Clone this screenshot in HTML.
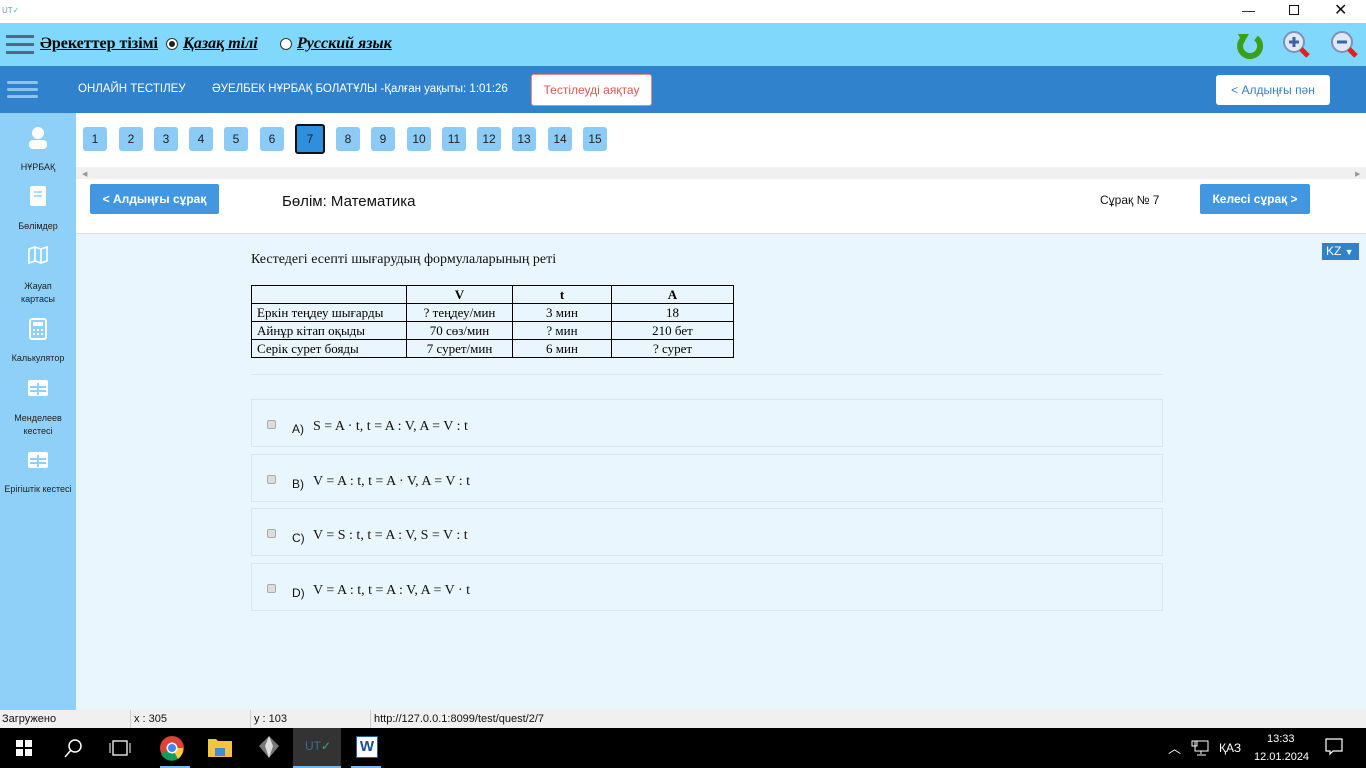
<!DOCTYPE html>
<html><head><meta charset="utf-8"><style>
*{box-sizing:border-box;margin:0;padding:0}
body{width:1366px;height:768px;position:relative;overflow:hidden;font-family:"Liberation Sans","DejaVu Sans",sans-serif;background:#eaf6fd}
.a{position:absolute}
.num{position:absolute;top:127px;width:24px;height:24px;background:#8ccbf5;border-radius:3px;font-size:12px;text-align:center;line-height:24px;color:#222}
.side{position:absolute;left:0;width:76px;text-align:center;font-size:9px;color:#222}
.opt{position:absolute;left:251px;width:912px;height:48px;border:1px solid #d8e7f0;background:#eaf6fd}
.cb{position:absolute;left:15px;top:20px;width:9px;height:9px;border:1px solid #aaa;border-radius:2px;background:#ddd}
.lt{position:absolute;left:40px;top:20px;font-size:12px;color:#111}
.ft{position:absolute;left:61px;top:19px;font:14px "Liberation Serif",serif;color:#111}
table{border-collapse:collapse;font:13px "Liberation Serif",serif;position:absolute;left:251px;top:285px}
td{border:1px solid #000;height:18px;padding:0 5px;text-align:center;line-height:16px}
td:first-child{text-align:left}
</style></head><body>
<div class="a" style="left:0;top:0;width:1366px;height:23px;background:#fff"></div>
<div class="a" style="left:2px;top:6px;font-size:8px;color:#6a9ab8">UT<span style="color:#3c9">✓</span></div>
<div class="a" style="left:1242px;top:3px;font-size:13px;color:#111">—</div>
<div class="a" style="left:1289px;top:5px;width:10px;height:10px;border:1px solid #111"></div>
<div class="a" style="left:1334px;top:0px;font-size:16px;color:#111">✕</div>
<div class="a" style="left:0;top:23px;width:1366px;height:43px;background:#80d9fd"></div>
<div class="a" style="left:6px;top:35px;width:28px;height:3px;background:#55658a;box-shadow:0 8px 0 #55658a,0 16px 0 #55658a"></div>
<div class="a" style="left:40px;top:35px;font:bold 16px 'Liberation Serif',serif;text-decoration:underline">Әрекеттер тізімі</div>
<div class="a" style="left:166px;top:38px;width:12px;height:12px;border-radius:50%;border:1px solid #333;background:#fff"><div style="margin:2px;width:6px;height:6px;border-radius:50%;background:#222"></div></div>
<div class="a" style="left:183px;top:35px;font:bold italic 16px 'Liberation Serif',serif;text-decoration:underline">Қазақ тілі</div>
<div class="a" style="left:280px;top:38px;width:12px;height:12px;border-radius:50%;border:1px solid #333;background:#fff"></div>
<div class="a" style="left:297px;top:35px;font:bold italic 16px 'Liberation Serif',serif;text-decoration:underline">Русский язык</div>
<svg class="a" style="left:1234px;top:30px" width="30" height="30"><path d="M22 8 A10 10 0 1 1 9 9" fill="none" stroke="#3aa01a" stroke-width="6"/><path d="M4 4 L15 4 L9 14Z" fill="#3aa01a"/></svg>
<svg class="a" style="left:1282px;top:30px" width="30" height="30"><circle cx="12" cy="12" r="10" fill="#dfe8f5" stroke="#8090b8" stroke-width="2"/><path d="M7 12h10M12 7v10" stroke="#4060a0" stroke-width="3"/><path d="M19 19l7 7" stroke="#e02020" stroke-width="5"/></svg>
<svg class="a" style="left:1330px;top:30px" width="30" height="30"><circle cx="12" cy="12" r="10" fill="#dfe8f5" stroke="#8090b8" stroke-width="2"/><path d="M7 12h10" stroke="#4060a0" stroke-width="3"/><path d="M19 19l7 7" stroke="#e02020" stroke-width="5"/></svg>
<div class="a" style="left:0;top:66px;width:1366px;height:47px;background:#3182cc"></div>
<div class="a" style="left:7px;top:81px;width:31px;height:3px;border-radius:2px;background:#8cc4f0;box-shadow:0 7px 0 #8cc4f0,0 14px 0 #8cc4f0"></div>
<div class="a" style="left:78px;top:83px;font-size:11.5px;color:#fff">ОНЛАЙН ТЕСТІЛЕУ</div>
<div class="a" style="left:212px;top:83px;font-size:11.5px;color:#fff">ӘУЕЛБЕК НҰРБАҚ БОЛАТҰЛЫ -Қалған уақыты: 1:01:26</div>
<div class="a" style="left:531px;top:74px;width:121px;height:32px;background:#fff;border:1px solid #e88;border-radius:3px;color:#e05555;font-size:12px;text-align:center;line-height:30px">Тестілеуді аяқтау</div>
<div class="a" style="left:1216px;top:75px;width:114px;height:30px;background:#fff;border-radius:3px;color:#3182cc;font-size:12px;text-align:center;line-height:30px">&lt; Алдыңғы пән</div>
<div class="a" style="left:0;top:113px;width:76px;height:597px;background:#8fd0f9"></div>
<svg class="a" style="left:27px;top:126px" width="22" height="24"><circle cx="11" cy="7" r="6" fill="#fff"/><rect x="2" y="14" width="18" height="9" rx="4" fill="#fff"/></svg>
<div class="side" style="top:162px">НҰРБАҚ</div>
<svg class="a" style="left:29px;top:185px" width="18" height="22"><rect x="1" y="1" width="16" height="20" rx="2" fill="#fff"/><path d="M5 7h8M5 11h8" stroke="#8fd0f9" stroke-width="1.5"/></svg>
<div class="side" style="top:221px">Бөлімдер</div>
<svg class="a" style="left:28px;top:246px" width="20" height="18"><path d="M1 3l6-2 6 2 6-2v14l-6 2-6-2-6 2z M7 1v14 M13 3v14" fill="none" stroke="#fff" stroke-width="1.6"/></svg>
<div class="side" style="top:280px;line-height:13px">Жауап<br>картасы</div>
<svg class="a" style="left:29px;top:318px" width="18" height="22"><rect x="1" y="1" width="16" height="20" rx="2" fill="none" stroke="#fff" stroke-width="2"/><rect x="4" y="4" width="10" height="4" fill="#fff"/><path d="M4 11h2v2H4zM8 11h2v2H8zM12 11h2v2h-2zM4 15h2v2H4zM8 15h2v2H8zM12 15h2v2h-2z" fill="#fff"/></svg>
<div class="side" style="top:353px">Калькулятор</div>
<svg class="a" style="left:28px;top:380px" width="20" height="16"><rect x="0" y="0" width="20" height="16" rx="2" fill="#fff"/><path d="M2 7h16M10 3v12M2 11h16" stroke="#8fd0f9" stroke-width="2"/></svg>
<div class="side" style="top:412px;line-height:13px">Менделеев<br>кестесі</div>
<svg class="a" style="left:28px;top:452px" width="20" height="16"><rect x="0" y="0" width="20" height="16" rx="2" fill="#fff"/><path d="M2 7h16M10 3v12M2 11h16" stroke="#8fd0f9" stroke-width="2"/></svg>
<div class="side" style="top:484px">Ерігіштік кестесі</div>
<div class="a" style="left:76px;top:113px;width:1290px;height:54px;background:#fff"></div>
<div class="a" style="left:76px;top:167px;width:1290px;height:12px;background:#f0f0f0"></div>
<div class="a" style="left:82px;top:170px;font-size:7px;color:#999">◀</div>
<div class="a" style="left:1355px;top:170px;font-size:7px;color:#999">▶</div>
<div class="num" style="left:83px">1</div><div class="num" style="left:119px">2</div><div class="num" style="left:154px">3</div><div class="num" style="left:189px">4</div><div class="num" style="left:224px">5</div><div class="num" style="left:260px">6</div>
<div class="num" style="left:295px;top:124px;width:30px;height:30px;line-height:26px;background:#2e90dc;border:2px solid #111">7</div>
<div class="num" style="left:336px">8</div><div class="num" style="left:371px">9</div><div class="num" style="left:407px">10</div><div class="num" style="left:442px">11</div><div class="num" style="left:477px">12</div><div class="num" style="left:512px">13</div><div class="num" style="left:548px">14</div><div class="num" style="left:583px">15</div>
<div class="a" style="left:76px;top:179px;width:1290px;height:55px;background:#fff;border-bottom:1px solid #dde"></div>
<div class="a" style="left:90px;top:184px;width:129px;height:30px;background:#4198e0;border-radius:2px;color:#fff;font-weight:bold;font-size:12px;text-align:center;line-height:30px">&lt; Алдыңғы сұрақ</div>
<div class="a" style="left:282px;top:193px;font-size:15px;color:#111">Бөлім: Математика</div>
<div class="a" style="left:1100px;top:193px;font-size:12px;color:#111">Сұрақ № 7</div>
<div class="a" style="left:1200px;top:184px;width:110px;height:30px;background:#4198e0;border-radius:2px;color:#fff;font-weight:bold;font-size:12px;text-align:center;line-height:30px">Келесі сұрақ &gt;</div>
<div class="a" style="left:1322px;top:243px;width:37px;height:17px;background:#3182cc;color:#fff;font-size:12px;line-height:17px;padding-left:4px">KZ <span style="font-size:9px">▼</span></div>
<div class="a" style="left:251px;top:252px;font:14px 'Liberation Serif',serif;color:#111">Кестедегі есепті шығарудың формулаларының реті</div>
<table>
<tr><td style="width:155px"></td><td style="width:106px"><b>V</b></td><td style="width:99px"><b>t</b></td><td style="width:122px"><b>A</b></td></tr>
<tr><td>Еркін теңдеу шығарды</td><td>? теңдеу/мин</td><td>3 мин</td><td>18</td></tr>
<tr><td>Айнұр кітап оқыды</td><td>70 сөз/мин</td><td>? мин</td><td>210 бет</td></tr>
<tr><td>Серік сурет бояды</td><td>7 сурет/мин</td><td>6 мин</td><td>? сурет</td></tr>
</table>
<div class="a" style="left:251px;top:374px;width:912px;height:1px;background:#dde8ee"></div>
<div class="opt" style="top:399px"><div class="cb"></div><div class="lt" style="top:22px">A)</div><div class="ft">S = A · t, t = A : V, A = V : t</div></div>
<div class="opt" style="top:454px"><div class="cb"></div><div class="lt" style="top:22px">B)</div><div class="ft">V = A : t, t = A · V, A = V : t</div></div>
<div class="opt" style="top:508px"><div class="cb"></div><div class="lt" style="top:22px">C)</div><div class="ft">V = S : t, t = A : V, S = V : t</div></div>
<div class="opt" style="top:563px"><div class="cb"></div><div class="lt" style="top:22px">D)</div><div class="ft">V = A : t, t = A : V, A = V · t</div></div>
<div class="a" style="left:0;top:710px;width:1366px;height:18px;background:#f0f0f0;font-size:11px;color:#111;line-height:18px">
<span class="a" style="left:2px">Загружено</span>
<span class="a" style="left:130px;border-left:1px solid #ccc;padding-left:3px">x : 305</span>
<span class="a" style="left:250px;border-left:1px solid #ccc;padding-left:3px">y : 103</span>
<span class="a" style="left:370px;border-left:1px solid #ccc;padding-left:3px">http://127.0.0.1:8099/test/quest/2/7</span>
</div>
<div class="a" style="left:0;top:728px;width:1366px;height:40px;background:#000"></div>
<svg class="a" style="left:16px;top:740px" width="16" height="16"><path d="M0 0h7v7H0zM9 0h7v7H9zM0 9h7v7H0zM9 9h7v7H9z" fill="#fff"/></svg>
<svg class="a" style="left:63px;top:738px" width="20" height="20"><circle cx="12" cy="8" r="6" fill="none" stroke="#fff" stroke-width="1.5"/><path d="M8 12l-6 7" stroke="#fff" stroke-width="1.5"/></svg>
<svg class="a" style="left:109px;top:740px" width="22" height="16"><rect x="4" y="1" width="14" height="14" fill="none" stroke="#fff" stroke-width="1.3"/><path d="M1 3v10M21 3v10" stroke="#fff"/></svg>
<svg class="a" style="left:159px;top:735px" width="26" height="26"><circle cx="13" cy="13" r="12" fill="#db4437"/><path d="M13 13L2 19A12 12 0 0 0 19 24z" fill="#0f9d58"/><path d="M13 13L24 13A12 12 0 0 1 19 24z" fill="#ffcd40"/><circle cx="13" cy="13" r="5.5" fill="#fff"/><circle cx="13" cy="13" r="4" fill="#4285f4"/></svg>
<svg class="a" style="left:207px;top:736px" width="26" height="22"><path d="M1 3h8l2 2h14v16H1z" fill="#f5c342"/><rect x="8" y="12" width="10" height="8" fill="#3b8fd8"/></svg>
<svg class="a" style="left:259px;top:736px" width="20" height="24"><path d="M10 0L20 10 10 22 0 10z" fill="#777"/><path d="M10 0L14 10 10 22 6 10z" fill="#ddd"/></svg>
<div class="a" style="left:293px;top:728px;width:48px;height:40px;background:#333"></div>
<div class="a" style="left:305px;top:739px;font-size:12px;color:#3b6f8f">UT<span style="color:#2db36b">✓</span></div>
<div class="a" style="left:293px;top:766px;width:48px;height:2px;background:#76b9ed"></div>
<div class="a" style="left:356px;top:736px;width:22px;height:22px;background:#fff;border:1px solid #2c5aa0;color:#1d4f9c;font:bold 15px 'Liberation Sans';text-align:center;line-height:20px">W</div>
<div class="a" style="left:160px;top:766px;width:30px;height:2px;background:#76b9ed"></div>
<div class="a" style="left:351px;top:766px;width:30px;height:2px;background:#76b9ed"></div>
<div class="a" style="left:1168px;top:738px;color:#fff;font-size:13px">︿</div>
<svg class="a" style="left:1191px;top:740px" width="18" height="16"><rect x="4" y="1" width="13" height="10" fill="none" stroke="#fff"/><rect x="1" y="1" width="5" height="5" fill="none" stroke="#fff"/><path d="M10 11v3M6 15h9" stroke="#fff"/></svg>
<div class="a" style="left:1219px;top:741px;color:#fff;font-size:12px">ҚАЗ</div>
<div class="a" style="left:1267px;top:733px;color:#fff;font-size:11px">13:33</div>
<div class="a" style="left:1254px;top:751px;color:#fff;font-size:11px">12.01.2024</div>
<svg class="a" style="left:1325px;top:738px" width="18" height="18"><path d="M1 1h16v12h-9l-3 3v-3H1z" fill="none" stroke="#fff" stroke-width="1.2"/></svg>
</body></html>
